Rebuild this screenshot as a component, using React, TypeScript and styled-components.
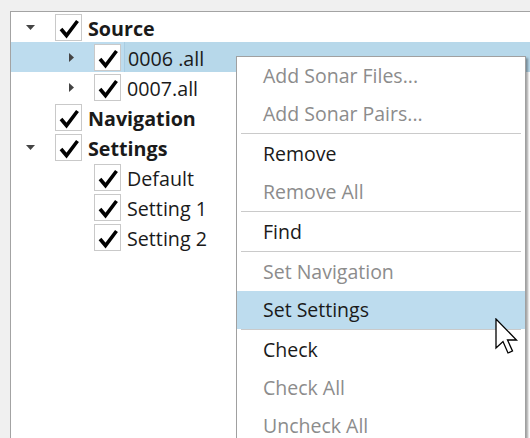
import React from "react";
import styled, { createGlobalStyle } from "styled-components";

const Global = createGlobalStyle`
  html, body { margin: 0; padding: 0; background: #f0f0f0; }
  body { font-family: "Open Sans", "Noto Sans", sans-serif; }
`;

const Screen = styled.div`
  position: relative;
  width: 530px;
  height: 438px;
  overflow: hidden;
  background: #f0f0f0;
  padding: 11px 0 0 10px;
  box-sizing: border-box;
`;

const TreePanel = styled.div`
  height: 100%;
  background: #ffffff;
  border-left: 1px solid #a3a3a3;
  border-top: 1px solid #a3a3a3;
  box-sizing: border-box;
`;

const Row = styled.div<{ $level: number; $selected?: boolean }>`
  display: flex;
  align-items: center;
  height: 30px;
  padding-left: ${(p) => p.$level * 39}px;
  background: ${(p) => (p.$selected ? "#bddcee" : "transparent")};
`;

const Expander = styled.div<{ $state: "open" | "closed" | "none" }>`
  width: 44px;
  height: 30px;
  flex: none;
  display: flex;
  align-items: center;
  padding-left: ${(p) => (p.$state === "open" ? 15 : 19)}px;
  box-sizing: border-box;
`;

const CheckBox = styled.div`
  width: 27px;
  height: 27px;
  flex: none;
  box-sizing: border-box;
  border: 1px solid #c9c9c9;
  background: #ffffff;
  display: flex;
  align-items: center;
  justify-content: center;
`;

const Label = styled.span<{ $bold?: boolean; $focused?: boolean }>`
  margin-left: ${(p) => (p.$focused ? 3 : 6)}px;
  padding-left: ${(p) => (p.$focused ? 3 : 0)}px;
  padding-top: 4px;
  height: 30px;
  line-height: 26px;
  font-size: 19.7px;
  font-weight: ${(p) => (p.$bold ? 700 : 400)};
  color: #1a1a1a;
  white-space: nowrap;
  box-sizing: border-box;
  border-left: ${(p) => (p.$focused ? "1px solid #a9cde2" : "none")};
  background: ${(p) => (p.$focused ? "#b7d8ea" : "transparent")};
  flex: ${(p) => (p.$focused ? 1 : "none")};
`;

const Menu = styled.div`
  position: absolute;
  left: 236px;
  top: 56px;
  width: 290px;
  background: #ffffff;
  border: 1px solid #a0a0a0;
  box-shadow: 2px 2px 2px rgba(0, 0, 0, 0.35);
  box-sizing: border-box;
`;

const MenuItem = styled.div<{ $disabled?: boolean; $hot?: boolean }>`
  height: 38px;
  line-height: 38px;
  padding-left: 26px;
  font-size: 19.5px;
  color: ${(p) => (p.$disabled ? "#8c8c8c" : "#1a1a1a")};
  background: ${(p) => (p.$hot ? "#bddcee" : "transparent")};
  white-space: nowrap;
`;

const Separator = styled.div`
  height: 2px;
  margin: 0 4px;
  box-sizing: border-box;
  border-top: 1px solid #cacaca;
`;

const Cursor = styled.svg`
  position: absolute;
  left: 495px;
  top: 318px;
`;

const Triangle = ({ open }: { open: boolean }) =>
  open ? (
    <svg width="9" height="5" viewBox="0 0 9 5">
      <polygon points="0,0 9,0 4.5,5" fill="#444" />
    </svg>
  ) : (
    <svg width="5" height="9" viewBox="0 0 5 9">
      <polygon points="0,0 5,4.5 0,9" fill="#444" />
    </svg>
  );

const Check = () => (
  <svg width="25" height="25" viewBox="0 0 25 25">
    <polyline
      points="5,14 10.5,20.5 21.5,6"
      fill="none"
      stroke="#000"
      strokeWidth="3.6"
      strokeLinejoin="miter"
    />
  </svg>
);

type Node = {
  label: string;
  level: number;
  bold?: boolean;
  expander: "open" | "closed" | "none";
  selected?: boolean;
};

const nodes: Node[] = [
  { label: "Source", level: 0, bold: true, expander: "open" },
  { label: "0006 .all", level: 1, expander: "closed", selected: true },
  { label: "0007.all", level: 1, expander: "closed" },
  { label: "Navigation", level: 0, bold: true, expander: "none" },
  { label: "Settings", level: 0, bold: true, expander: "open" },
  { label: "Default", level: 1, expander: "none" },
  { label: "Setting 1", level: 1, expander: "none" },
  { label: "Setting 2", level: 1, expander: "none" },
];

type Entry =
  | { kind: "item"; label: string; disabled?: boolean; hot?: boolean }
  | { kind: "sep" };

const menu: Entry[] = [
  { kind: "item", label: "Add Sonar Files...", disabled: true },
  { kind: "item", label: "Add Sonar Pairs...", disabled: true },
  { kind: "sep" },
  { kind: "item", label: "Remove" },
  { kind: "item", label: "Remove All", disabled: true },
  { kind: "sep" },
  { kind: "item", label: "Find" },
  { kind: "sep" },
  { kind: "item", label: "Set Navigation", disabled: true },
  { kind: "item", label: "Set Settings", hot: true },
  { kind: "sep" },
  { kind: "item", label: "Check" },
  { kind: "item", label: "Check All", disabled: true },
  { kind: "item", label: "Uncheck All", disabled: true },
];

export default function App() {
  return (
    <>
      <Global />
      <Screen>
        <TreePanel>
          {nodes.map((n) => (
            <Row key={n.label} $level={n.level} $selected={n.selected}>
              <Expander $state={n.expander}>
                {n.expander !== "none" && <Triangle open={n.expander === "open"} />}
              </Expander>
              <CheckBox>
                <Check />
              </CheckBox>
              <Label $bold={n.bold} $focused={n.selected}>
                {n.label}
              </Label>
            </Row>
          ))}
        </TreePanel>
        <Menu>
          {menu.map((e, i) =>
            e.kind === "sep" ? (
              <Separator key={i} />
            ) : (
              <MenuItem key={i} $disabled={e.disabled} $hot={e.hot}>
                {e.label}
              </MenuItem>
            )
          )}
        </Menu>
        <Cursor width="24" height="38" viewBox="0 0 24 38">
          <path
            d="M1 1 L1 30 L8 23.5 L13 35 L17.5 33 L12.5 22 L21.5 22 Z"
            fill="#ffffff"
            stroke="#000000"
            strokeWidth="1.3"
            strokeLinejoin="miter"
          />
        </Cursor>
      </Screen>
    </>
  );
}
